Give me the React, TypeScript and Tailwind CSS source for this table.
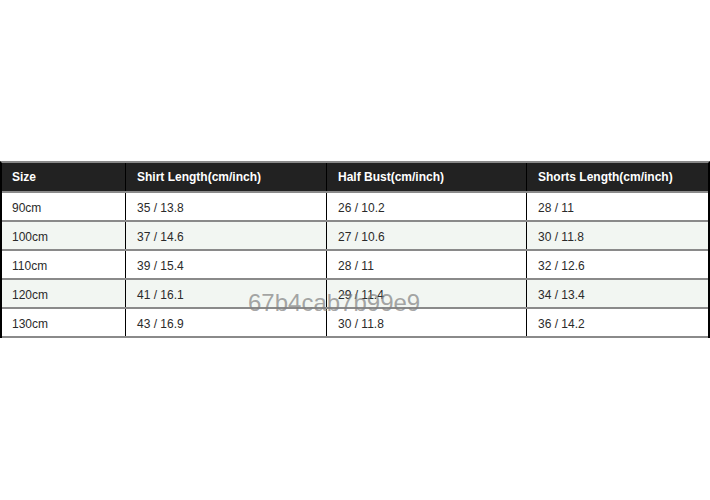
import React from "react";

const rows = [
  ["90cm", "35 / 13.8", "26 / 10.2", "28 / 11"],
  ["100cm", "37 / 14.6", "27 / 10.6", "30 / 11.8"],
  ["110cm", "39 / 15.4", "28 / 11", "32 / 12.6"],
  ["120cm", "41 / 16.1", "29 / 11.4", "34 / 13.4"],
  ["130cm", "43 / 16.9", "30 / 11.8", "36 / 14.2"],
];

const headers = ["Size", "Shirt Length(cm/inch)", "Half Bust(cm/inch)", "Shorts Length(cm/inch)"];

function Row({ cells, head, alt }: { cells: string[]; head?: boolean; alt?: boolean }) {
  const bg = head
    ? "bg-[#222222] text-white font-bold h-[30px]"
    : alt
    ? "bg-[#f2f6f2] text-[#2a2a2a] h-[29px]"
    : "bg-white text-[#2a2a2a] h-[29px]";
  const pad = head ? "" : "pt-[3px]";
  return (
    <div className={`flex border-b-2 border-[#8a8a8a] ${bg}`}>
      <div className={`w-[124px] shrink-0 border-r border-black pl-[10px] flex items-center ${pad}`}>{cells[0]}</div>
      <div className={`w-[201px] shrink-0 border-r border-black pl-[11px] flex items-center ${pad}`}>{cells[1]}</div>
      <div className={`w-[200px] shrink-0 border-r border-black pl-[11px] flex items-center ${pad}`}>{cells[2]}</div>
      <div className={`flex-1 pl-[11px] flex items-center ${pad}`}>{cells[3]}</div>
    </div>
  );
}

export default function App() {
  return (
    <div
      className="w-[710px] h-[500px] bg-white pt-[161px] relative"
      style={{ fontFamily: '"Liberation Sans", Arial, sans-serif' }}
    >
      <div className="border-x-2 border-black border-t-2 border-t-[#8a8a8a] text-[12px] leading-none">
        <Row cells={headers} head />
        {rows.map((r, i) => (
          <Row key={i} cells={r} alt={i % 2 === 1} />
        ))}
      </div>
      <div className="absolute left-[248px] top-[291px] text-[24px] leading-none text-[#808080]/70 pointer-events-none">
        67b4cab7b99e9
      </div>
    </div>
  );
}
